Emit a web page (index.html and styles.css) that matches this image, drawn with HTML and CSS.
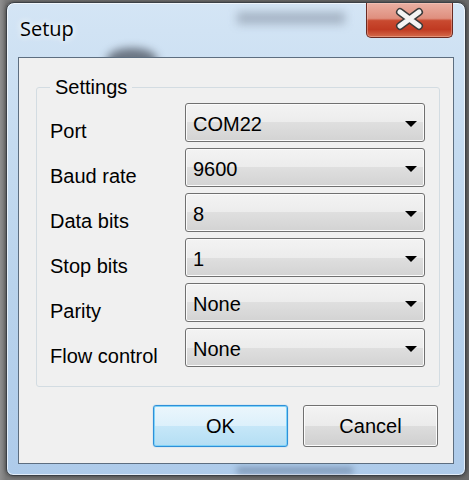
FILE: index.html
```html
<!DOCTYPE html>
<html>
<head>
<meta charset="utf-8">
<title>Setup</title>
<link rel="stylesheet" href="styles.css">
</head>
<body>
<div class="window">
  <div class="glass-blur blur-text"></div>
  <div class="glass-blur blur-arc"></div>
  <div class="glass-blur blur-bottom"></div>
  <div class="titlebar">
    <span class="title">Setup</span>
    <button class="close" aria-label="Close">
      <svg width="87" height="35" viewBox="0 0 87 35">
        <path d="M34 10 L53 24 M53 10 L34 24" stroke="#3b3b3b" stroke-width="8" stroke-linecap="round" fill="none"/>
        <path d="M34 10 L53 24 M53 10 L34 24" stroke="#f4f4f4" stroke-width="5" stroke-linecap="round" fill="none"/>
      </svg>
    </button>
  </div>
  <div class="client">
    <fieldset class="group">
      <legend>Settings</legend>
      <div class="rows">
        <div class="row"><span class="label">Port</span><div class="combo"><span class="value">COM22</span><span class="arrow"></span></div></div>
        <div class="row"><span class="label">Baud rate</span><div class="combo"><span class="value">9600</span><span class="arrow"></span></div></div>
        <div class="row"><span class="label">Data bits</span><div class="combo"><span class="value">8</span><span class="arrow"></span></div></div>
        <div class="row"><span class="label">Stop bits</span><div class="combo"><span class="value">1</span><span class="arrow"></span></div></div>
        <div class="row"><span class="label">Parity</span><div class="combo"><span class="value">None</span><span class="arrow"></span></div></div>
        <div class="row"><span class="label">Flow control</span><div class="combo"><span class="value">None</span><span class="arrow"></span></div></div>
      </div>
    </fieldset>
    <div class="buttons">
      <button class="btn btn-default">OK</button>
      <button class="btn">Cancel</button>
    </div>
  </div>
</div>
</body>
</html>
```
FILE: styles.css
```css
html, body {
  margin: 0;
}
body {
  width: 469px;
  height: 480px;
  overflow: hidden;
  box-sizing: border-box;
  padding: 2px 0 0 6px;
  background: linear-gradient(90deg, #8e8e8e 0px, #7a7a7a 6px, #6a6a6a 100%);
  font-family: "Liberation Sans", Arial, sans-serif;
}
.window {
  position: relative;
  width: 460px;
  height: 474px;
  box-sizing: border-box;
  border: 1px solid #3b4046;
  border-radius: 8px 8px 7px 7px;
  background: linear-gradient(180deg, #d4e5f5 0%, #c5dbf0 30%, #b9d3ec 60%, #aecbea 100%);
  box-shadow: inset 0 0 0 1px rgba(255,255,255,.65), 0 0 4px rgba(0,0,0,.55);
  padding: 0 11px 11px;
  display: flex;
  flex-direction: column;
  overflow: hidden;
}
.glass-blur {
  position: absolute;
  pointer-events: none;
}
.blur-text {
  left: 230px;
  top: 9px;
  width: 108px;
  height: 12px;
  background: rgba(80,90,105,.35);
  filter: blur(5px);
}
.blur-arc {
  left: 100px;
  top: 45px;
  width: 50px;
  height: 22px;
  border-radius: 50% 50% 0 0;
  background: rgba(25,30,40,.55);
  filter: blur(4px);
}
.blur-bottom {
  left: 230px;
  top: 464px;
  width: 116px;
  height: 7px;
  background: rgba(40,60,90,.35);
  filter: blur(3px);
}
.titlebar {
  position: relative;
  height: 54px;
  flex: none;
  display: flex;
  justify-content: space-between;
  align-items: flex-start;
}
.title {
  margin-top: 12px;
  padding-left: 2px;
  font-family: "Open Sans", "Noto Sans", sans-serif;
  font-size: 20px;
  line-height: 28px;
  color: #000;
  text-shadow: 0 0 6px rgba(255,255,255,.95), 0 0 10px rgba(255,255,255,.8);
}
.close {
  width: 87px;
  height: 35px;
  margin-right: 1px;
  padding: 0;
  box-sizing: border-box;
  border: 1px solid #6a2a22;
  border-top: none;
  border-radius: 0 0 5px 5px;
  background: linear-gradient(180deg, #eab0a3 0%, #df8f7e 45%, #c94a30 52%, #c03a22 78%, #d46b4b 100%);
  box-shadow: inset 0 0 0 1px rgba(255,220,210,.35);
  display: block;
}
.close svg {
  display: block;
  margin: -1px 0 0 -1px;
}
.client {
  position: relative;
  z-index: 1;
  flex: 1;
  background: #f0f0f0;
  border: 1px solid #5d6e80;
  display: flex;
  flex-direction: column;
}
.group {
  margin: 19px 13px 0 17px;
  padding: 6px 13px 19px 13px;
  border: 1px solid #d3dce2;
  border-radius: 3px;
  min-width: 0;
}
.group legend {
  padding: 0 5px;
  font-size: 20px;
  line-height: 20px;
  color: #000;
}
.rows {
  display: flex;
  flex-direction: column;
  gap: 6px;
}
.row {
  display: flex;
  align-items: flex-end;
  height: 39px;
}
.label {
  width: 135px;
  flex: none;
  font-size: 20px;
  line-height: 20px;
  padding-bottom: 1px;
  color: #000;
}
.combo {
  width: 240px;
  height: 39px;
  box-sizing: border-box;
  border: 1px solid #707070;
  border-radius: 3px;
  background: linear-gradient(180deg, #f3f3f3 0%, #ececec 50%, #dfdfdf 50%, #d3d3d3 100%);
  box-shadow: inset 0 0 0 1px #fbfbfb;
  display: flex;
  align-items: center;
  justify-content: space-between;
  padding: 2px 7px 0 7px;
}
.value {
  font-size: 20px;
  line-height: 22px;
  color: #000;
}
.arrow {
  width: 0;
  height: 0;
  border-left: 6px solid transparent;
  border-right: 6px solid transparent;
  border-top: 6px solid #000;
}
.buttons {
  display: flex;
  justify-content: flex-end;
  gap: 15px;
  margin: 18px 15px 0 0;
}
.btn {
  width: 135px;
  height: 42px;
  box-sizing: border-box;
  padding: 0;
  font-family: "Liberation Sans", Arial, sans-serif;
  font-size: 20px;
  color: #000;
  border: 1px solid #707070;
  border-radius: 3px;
  background: linear-gradient(180deg, #f3f3f3 0%, #ebebeb 50%, #dddddd 50%, #cfcfcf 100%);
  box-shadow: inset 0 0 0 1px #fcfcfc;
}
.btn-default {
  border-color: #2f8fd8;
  background: linear-gradient(180deg, #ebf6fc 0%, #dcf0fb 50%, #c6e7f8 50%, #b4def4 100%);
  box-shadow: inset 0 0 0 1px #7fd3f8, 0 0 1px #3fa9e6;
}
```
